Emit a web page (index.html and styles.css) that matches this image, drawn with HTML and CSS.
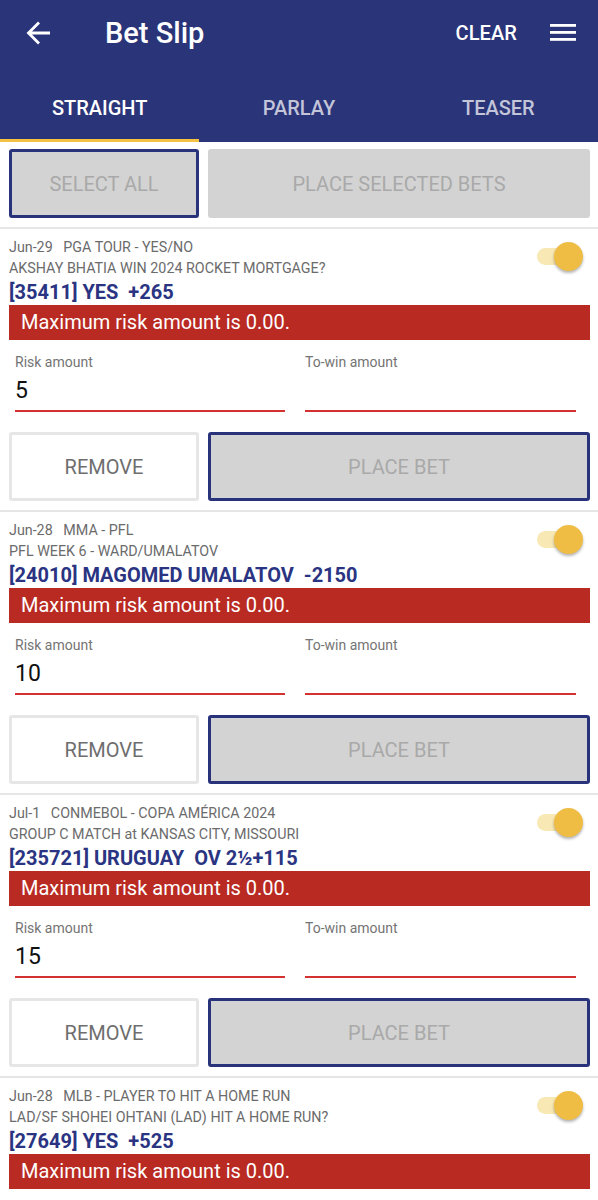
FILE: index.html
```html
<!DOCTYPE html>
<html>
<head>
<meta charset="utf-8">
<link rel="stylesheet" href="styles.css">
</head>
<body>
<header class="appbar">
  <div class="topbar">
    <svg class="back" width="26" height="26" viewBox="0 0 26 26"><path d="M24 13H3M13 2.5L2.5 13 13 23.5" fill="none" stroke="#fff" stroke-width="2.8"/></svg>
    <div class="title">Bet Slip</div>
    <div class="clear">CLEAR</div>
    <svg class="menu" width="26" height="18" viewBox="0 0 26 18"><rect x="0" y="0" width="26" height="2.8" fill="#fff"/><rect x="0" y="7" width="26" height="2.8" fill="#fff"/><rect x="0" y="14" width="26" height="2.8" fill="#fff"/></svg>
  </div>
  <nav class="tabs">
    <div class="tab active">STRAIGHT</div>
    <div class="tab">PARLAY</div>
    <div class="tab">TEASER</div>
  </nav>
</header>

<div class="toprow">
  <div class="btn btn-gray btn-outline sel">SELECT ALL</div>
  <div class="btn btn-gray place">PLACE SELECTED BETS</div>
</div>
<div class="sep"></div>

<div class="card">
  <div class="head">
    <div class="info">
      <div class="meta">Jun-29&nbsp;&nbsp;&nbsp;PGA TOUR - YES/NO</div>
      <div class="meta">AKSHAY BHATIA WIN 2024 ROCKET MORTGAGE?</div>
    </div>
    <div class="toggle"><span class="track"></span><span class="knob"></span></div>
  </div>
  <div class="pick">[35411] YES&nbsp;&nbsp;+265</div>
  <div class="err">Maximum risk amount is 0.00.</div>
  <div class="fields">
    <div class="field"><div class="label">Risk amount</div><div class="value">5</div></div>
    <div class="field"><div class="label">To-win amount</div><div class="value"></div></div>
  </div>
  <div class="actions">
    <div class="btn btn-white">REMOVE</div>
    <div class="btn btn-gray btn-outline">PLACE BET</div>
  </div>
</div>
<div class="sep"></div>

<div class="card">
  <div class="head">
    <div class="info">
      <div class="meta">Jun-28&nbsp;&nbsp;&nbsp;MMA - PFL</div>
      <div class="meta">PFL WEEK 6 - WARD/UMALATOV</div>
    </div>
    <div class="toggle"><span class="track"></span><span class="knob"></span></div>
  </div>
  <div class="pick">[24010] MAGOMED UMALATOV&nbsp;&nbsp;-2150</div>
  <div class="err">Maximum risk amount is 0.00.</div>
  <div class="fields">
    <div class="field"><div class="label">Risk amount</div><div class="value">10</div></div>
    <div class="field"><div class="label">To-win amount</div><div class="value"></div></div>
  </div>
  <div class="actions">
    <div class="btn btn-white">REMOVE</div>
    <div class="btn btn-gray btn-outline">PLACE BET</div>
  </div>
</div>
<div class="sep"></div>

<div class="card">
  <div class="head">
    <div class="info">
      <div class="meta">Jul-1&nbsp;&nbsp;&nbsp;CONMEBOL - COPA AMÉRICA 2024</div>
      <div class="meta">GROUP C MATCH at KANSAS CITY, MISSOURI</div>
    </div>
    <div class="toggle"><span class="track"></span><span class="knob"></span></div>
  </div>
  <div class="pick">[235721] URUGUAY&nbsp;&nbsp;OV 2½+115</div>
  <div class="err">Maximum risk amount is 0.00.</div>
  <div class="fields">
    <div class="field"><div class="label">Risk amount</div><div class="value">15</div></div>
    <div class="field"><div class="label">To-win amount</div><div class="value"></div></div>
  </div>
  <div class="actions">
    <div class="btn btn-white">REMOVE</div>
    <div class="btn btn-gray btn-outline">PLACE BET</div>
  </div>
</div>
<div class="sep"></div>

<div class="card last">
  <div class="head">
    <div class="info">
      <div class="meta">Jun-28&nbsp;&nbsp;&nbsp;MLB - PLAYER TO HIT A HOME RUN</div>
      <div class="meta">LAD/SF SHOHEI OHTANI (LAD) HIT A HOME RUN?</div>
    </div>
    <div class="toggle"><span class="track"></span><span class="knob"></span></div>
  </div>
  <div class="pick">[27649] YES&nbsp;&nbsp;+525</div>
  <div class="err">Maximum risk amount is 0.00.</div>
</div>
</body>
</html>
```

FILE: styles.css
```css
* { box-sizing: border-box; }
body {
  margin: 0;
  font-family: Roboto, "Liberation Sans", Arial, sans-serif;
  background: #fff;
  color: #111;
}
.appbar {
  background: #2a3479;
  color: #fff;
}
.topbar {
  height: 66px;
  display: flex;
  align-items: center;
  padding: 0 22px 0 26px;
}
.back { display: block; }
.title {
  font-size: 29px;
  font-weight: 500;
  margin-left: 53px;
  flex: 1;
  line-height: 32px;
}
.clear {
  font-size: 20px;
  font-weight: 500;
  margin-right: 33px;
  letter-spacing: 0.1px;
}
.menu { display: block; }
.tabs {
  display: flex;
  height: 76px;
}
.tab {
  flex: 1;
  text-align: center;
  font-size: 20px;
  font-weight: 500;
  line-height: 22px;
  padding-top: 31px;
  color: rgba(255, 255, 255, 0.72);
}
.tab.active {
  color: #fff;
  border-bottom: 3px solid #f6c244;
}
.toprow {
  display: flex;
  gap: 9px;
  padding: 7px 8px 0 9px;
}
.btn {
  height: 69px;
  display: flex;
  align-items: center;
  justify-content: center;
  font-size: 20px;
  border-radius: 3px;
}
.btn-gray {
  background: #d3d3d3;
  color: #a9a9a9;
}
.btn-outline {
  border: 3px solid #28337c;
}
.btn-white {
  background: #fff;
  border: 3px solid #e6e6e6;
  color: #6e6e6e;
}
.sel { width: 190px; }
.place { flex: 1; }
.sep {
  height: 2px;
  background: #e6e6e6;
  margin-top: 9px;
}
.card {
  padding: 8px 8px 0 9px;
}
.head {
  display: flex;
  align-items: center;
  justify-content: space-between;
}
.meta {
  font-size: 14.3px;
  line-height: 21px;
  color: #6b6b6b;
  white-space: nowrap;
}
.toggle {
  position: relative;
  width: 46px;
  height: 29px;
  margin-right: 7px;
  margin-top: -3px;
}
.track {
  position: absolute;
  left: 0;
  top: 6px;
  width: 38px;
  height: 17px;
  border-radius: 9px;
  background: #f8e8b4;
}
.knob {
  position: absolute;
  right: 0;
  top: 0;
  width: 29px;
  height: 29px;
  border-radius: 50%;
  background: #efbd44;
  box-shadow: 0 2px 3px rgba(0, 0, 0, 0.3);
}
.pick {
  font-size: 20px;
  font-weight: 700;
  line-height: 26px;
  color: #2a3482;
  white-space: nowrap;
}
.err {
  background: #b92a22;
  color: #fff;
  font-size: 20px;
  height: 35px;
  line-height: 35px;
  padding-left: 12px;
}
.fields {
  display: grid;
  grid-template-columns: 270px 271px;
  gap: 20px;
  padding-left: 6px;
  margin-top: 13px;
}
.label {
  font-size: 14px;
  line-height: 18px;
  color: #747474;
}
.value {
  font-size: 23px;
  line-height: 24px;
  height: 41px;
  padding-top: 8px;
  border-bottom: 2px solid #d43131;
  color: #111;
}
.actions {
  display: grid;
  grid-template-columns: 190px 1fr;
  gap: 9px;
  margin-top: 20px;
}
```
